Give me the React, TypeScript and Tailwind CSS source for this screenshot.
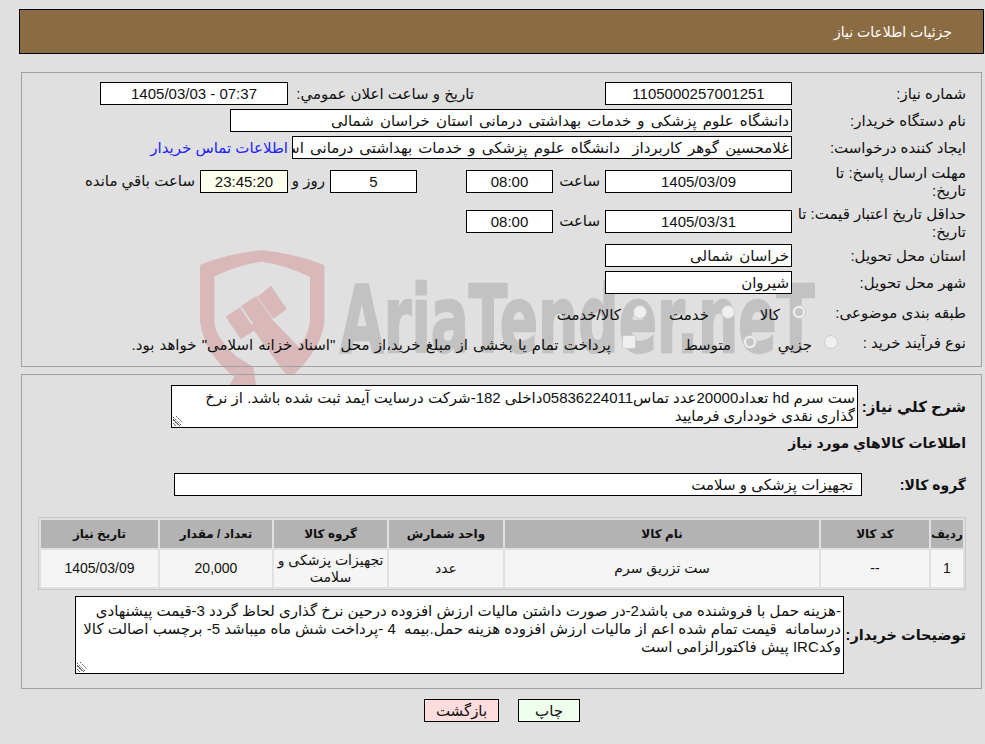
import React from "react";

const font = "font-['Liberation_Sans','DejaVu_Sans',sans-serif] text-[15px] leading-[18px] text-[#111]";

const Box = ({ value, className = "" }: { value: string; className?: string }) => (
    <div className={`h-[23px] shrink-0 border border-black text-center leading-[21px] ${className}`}>{value}</div>
);

const TextBox = ({ children, className = "" }: { children: React.ReactNode; className?: string }) => (
    <div className={`h-[23px] shrink-0 overflow-hidden whitespace-nowrap border border-black bg-white pr-[2px] leading-[21px] [word-spacing:2px] ${className}`}>
        {children}
    </div>
);

const Label = ({ children, className = "" }: { children: React.ReactNode; className?: string }) => (
    <div className={`w-[174px] shrink-0 whitespace-nowrap ${className}`}>{children}</div>
);

const Radio = ({ checked, label, className = "" }: { checked?: boolean; label: string; className?: string }) => (
    <div className={`flex items-center gap-[12px] ${className}`}>
        <span className="mb-[2px] flex h-[14px] w-[14px] shrink-0 items-center justify-center rounded-full border border-[#cdcdcd] bg-[#f0f0f0]">
            {checked && <span className="h-[8px] w-[8px] rounded-full bg-[#c6c6c6]" />}
        </span>
        <span className="mt-[3px]">{label}</span>
    </div>
);

// resize grip of the read-only textareas
const Grip = () => (
    <svg className="pointer-events-none absolute bottom-[2px] left-[2px]" width="10" height="10" viewBox="0 0 10 10" stroke="#555" strokeWidth="1" strokeDasharray="1.5 1">
        <path d="M0 1 L8 9 M0 4 L5 9 M3 0 L10 7" />
    </svg>
);

const Watermark = () => (
    <svg className="pointer-events-none absolute left-[195px] top-[245px] z-0" width="620" height="145" viewBox="0 0 1860 435" fill="#d9b8ba">
        <path d="M15 60 Q100 25 200 15 Q300 25 388 60 V230 Q380 310 295 390 L268 350 Q335 300 345 230 V95 Q270 60 200 50 Q130 60 58 95 V230 Q62 280 125 335 L175 365 L185 435 L95 435 L118 395 Q30 330 15 230 Z" />
        <path d="M165 240 L230 222 L330 325 L295 390 L270 385 Z" />
        <path d="M92 215 L135 187 L180 255 L137 283 Z" />
        <path d="M138 183 L184 153 L232 222 L185 252 Z" />
        <path d="M188 155 L228 122 L275 192 L235 222 Z" />
        <text
            x="435"
            y="321"
            direction="ltr"
            textAnchor="start"
            fill="#c2c2c2"
            stroke="#c2c2c2"
            strokeWidth="7"
            fontFamily="'DejaVu Sans','Liberation Sans',sans-serif"
            fontWeight="700"
            fontSize="280"
            textLength="1425"
            lengthAdjust="spacingAndGlyphs"
        >
            AriaTender.neT
        </text>
    </svg>
);

export default function App() {
    return (
        <div dir="rtl" className={`relative h-[744px] w-[985px] overflow-hidden bg-[#e0e0e0] ${font}`}>
            <Watermark />
            <div className="relative z-10">
                <div className="ml-[19px] mr-px mt-[9px] flex h-[45px] items-center border border-black bg-[#8b6c42] pr-[31px] text-[14px] text-white">
                    جزئیات اطلاعات نیاز
                </div>

                <div className="ml-[21px] mr-[3px] mt-[18px] h-[295px] border border-[#a0a0a0] pr-[15px] pt-[9px]">
                    <div className="flex h-[23px] items-center">
                        <Label>شماره نیاز:</Label>
                        <Box value="1105000257001251" className="w-[187px] bg-white" />
                        <div className="w-[131px]" />
                        <div className="w-[186px]">تاریخ و ساعت اعلان عمومي:</div>
                        <Box value="07:37 - 1405/03/03" className="w-[188px] bg-white" />
                    </div>
                    <div className="mt-[4px] flex h-[23px] items-center">
                        <Label>نام دستگاه خریدار:</Label>
                        <TextBox className="w-[562px]">دانشگاه علوم پزشکی و خدمات بهداشتی درمانی استان خراسان شمالی</TextBox>
                    </div>
                    <div className="mt-[4px] flex h-[23px] items-center">
                        <Label>ایجاد کننده درخواست:</Label>
                        <TextBox className="w-[500px]">غلامحسین گوهر کاربرداز&nbsp; دانشگاه علوم پزشکی و خدمات بهداشتی درمانی استان خراسان شمالی</TextBox>
                        <a className="mr-[4px] whitespace-nowrap text-[#2222ff]" href="#">اطلاعات تماس خریدار</a>
                    </div>
                    <div className="mt-[4px] flex h-[36px] items-center">
                        <Label className="mt-[2px]">مهلت ارسال پاسخ: تا<br />تاریخ:</Label>
                        <Box value="1405/03/09" className="w-[187px] bg-white" />
                        <div className="w-[52px] pr-[5px]">ساعت</div>
                        <Box value="08:00" className="w-[87px] bg-white" />
                        <div className="w-[49px]" />
                        <Box value="5" className="w-[87px] bg-white" />
                        <div className="w-[42px] pr-[5px]">روز و</div>
                        <Box value="23:45:20" className="w-[88px] bg-[#ffffee]" />
                        <div className="whitespace-nowrap pr-[5px]">ساعت باقي مانده</div>
                    </div>
                    <div className="mt-[4px] flex h-[36px] items-center">
                        <Label className="mt-[3px]">حداقل تاریخ اعتبار قیمت: تا<br />تاریخ:</Label>
                        <Box value="1405/03/31" className="w-[187px] bg-white" />
                        <div className="w-[52px] pr-[5px]">ساعت</div>
                        <Box value="08:00" className="w-[87px] bg-white" />
                    </div>
                    <div className="mt-[5px] flex h-[23px] items-center">
                        <Label>استان محل تحویل:</Label>
                        <TextBox className="w-[187px]">خراسان شمالی</TextBox>
                    </div>
                    <div className="mt-[4px] flex h-[23px] items-center">
                        <Label>شهر محل تحویل:</Label>
                        <TextBox className="w-[187px]">شیروان</TextBox>
                    </div>
                    <div className="mt-[8px] flex h-[22px] items-center">
                        <Label>طبقه بندی موضوعی:</Label>
                        <Radio checked label="کالا" className="mr-[-14px] w-[71px]" />
                        <Radio label="خدمت" className="w-[88px]" />
                        <Radio label="کالا/خدمت" />
                    </div>
                    <div className="mt-[8px] flex h-[22px] items-center">
                        <Label>نوع فرآیند خرید :</Label>
                        <Radio label="جزیي" className="mr-[-46px] w-[81px]" />
                        <Radio checked label="متوسط" className="w-[121px]" />
                        <span className="mb-[2px] h-[14px] w-[14px] shrink-0 rounded-[2px] border border-[#cdcdcd] bg-[#f0f0f0]" />
                        <div className="mr-[11px] mt-[3px] whitespace-nowrap [word-spacing:1px]">پرداخت تمام یا بخشی از مبلغ خرید،از محل "اسناد خزانه اسلامی" خواهد بود.</div>
                    </div>
                </div>

                <div className="ml-[21px] mr-[3px] mt-[7px] h-[315px] border border-[#a0a0a0] pr-[15px] pt-[10px]">
                    <div className="flex items-center">
                        <div className="w-[108px] shrink-0 whitespace-nowrap font-bold">شرح كلي نياز:</div>
                        <div className="relative flex">
                            <textarea
                                readOnly
                                className="h-[43px] w-[687px] resize-y overflow-hidden border border-black bg-white px-[2px] pt-[3px] leading-[18px] outline-none"
                                defaultValue="ست سرم hd تعداد20000عدد تماس05836224011داخلی 182-شرکت درسایت آیمد ثبت شده باشد. از نرخ گذاری نقدی خودداری فرمایید"
                            />
                            <Grip />
                        </div>
                    </div>
                    <div className="mt-[6px] text-[14px] font-bold">اطلاعات كالاهاي مورد نياز</div>
                    <div className="mt-[21px] flex items-center">
                        <div className="w-[104px] shrink-0 whitespace-nowrap text-[14px] font-bold">گروه کالا:</div>
                        <div className="h-[23px] w-[688px] border border-black bg-white pr-[8px] leading-[21px]">تجهیزات پزشکی و سلامت</div>
                    </div>
                    <table className="mt-[21px] w-[928px] table-fixed border-separate border-spacing-[2px] border border-[#c8c8c8] text-center text-[14px]">
                        <thead>
                            <tr className="h-[28px] bg-[#b3b3b3] text-[12px] font-bold">
                                <th className="w-[32px] p-0">ردیف</th>
                                <th className="w-[108px] p-0">کد کالا</th>
                                <th className="w-[314px] p-0">نام کالا</th>
                                <th className="w-[114px] p-0">واحد شمارش</th>
                                <th className="w-[113px] p-0">گروه کالا</th>
                                <th className="w-[112px] p-0">تعداد / مقدار</th>
                                <th className="p-0">تاریخ نیاز</th>
                            </tr>
                        </thead>
                        <tbody>
                            <tr className="h-[37px] bg-[#f5f5f5] leading-[17px]">
                                <td className="p-0">1</td>
                                <td className="p-0">--</td>
                                <td className="p-0">ست تزریق سرم</td>
                                <td className="p-0">عدد</td>
                                <td className="p-0">تجهیزات پزشکی و سلامت</td>
                                <td className="p-0">20,000</td>
                                <td className="p-0">1405/03/09</td>
                            </tr>
                        </tbody>
                    </table>
                    <div className="mt-[6px] flex items-center">
                        <div className="w-[122px] shrink-0 whitespace-nowrap text-[14.5px] font-bold">توضیحات خریدار:</div>
                        <div className="relative flex">
                            <textarea
                                readOnly
                                className="h-[78px] w-[769px] resize-y overflow-hidden border border-black bg-white px-[2px] pt-[5px] leading-[18px] outline-none"
                                defaultValue="-هزینه حمل با فروشنده می باشد2-در صورت داشتن مالیات ارزش افزوده درحین نرخ گذاری لحاظ گردد 3-قیمت پیشنهادی درسامانه  قیمت تمام شده اعم از مالیات ارزش افزوده هزینه حمل.بیمه  4 -پرداخت شش ماه میباشد 5- برچسب اصالت کالا وکدIRC پیش فاکتورالزامی است"
                            />
                            <Grip />
                        </div>
                    </div>
                </div>

                <div className="mt-[10px] flex justify-center gap-[19px] pl-[19px]">
                    <button className="h-[23px] w-[62px] border border-black bg-[#eeffee]">چاپ</button>
                    <button className="h-[23px] w-[75px] border border-black bg-[#ffdddd]">بازگشت</button>
                </div>
            </div>
        </div>
    );
}
